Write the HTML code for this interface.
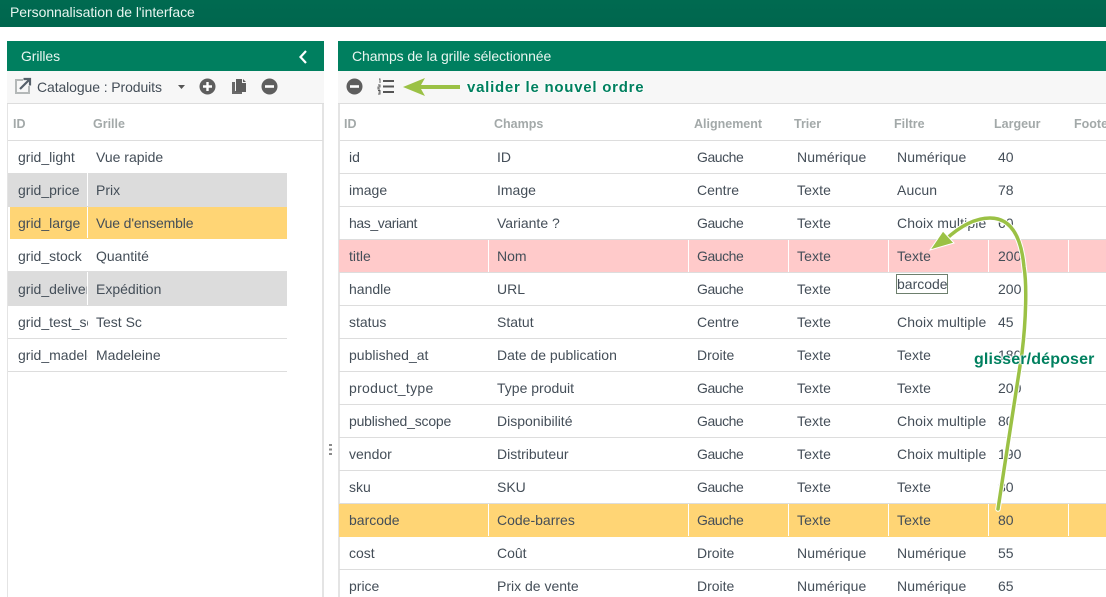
<!DOCTYPE html>
<html lang="fr"><head><meta charset="utf-8"><title>Personnalisation de l'interface</title>
<style>
*{box-sizing:border-box}
html,body{margin:0;padding:0;width:1106px;height:597px;overflow:hidden;background:#fff}
body{position:relative;font-family:"Liberation Sans",sans-serif;font-size:14px;color:#444e58}
.a{position:absolute}
.t{position:absolute;white-space:nowrap;line-height:18px}
.h{position:absolute;background:#007f5f;color:#e8f5f0;line-height:30px;height:30px;font-size:14px;letter-spacing:-.1px}
.bar{position:absolute;background:#f7f7f7;height:33px;border-bottom:1px solid #ddd}
.hd{position:absolute;white-space:nowrap;color:#a3a9a9;font-weight:bold;font-size:12.5px;line-height:18px}
.r{position:absolute;height:33px;border-bottom:1px solid #ddd;overflow:hidden}
.r span{position:absolute;top:7px;white-space:nowrap;line-height:18px}
.L{left:8px;width:279px}
.L span:nth-child(1){left:10px;width:70px;overflow:hidden}
.L span:nth-child(2){left:88px}
.R{left:339px;width:767px}
.R span:nth-child(1){left:10px}
.R span:nth-child(2){left:158px}
.R span:nth-child(3){left:358px}
.R span:nth-child(4){left:458px;letter-spacing:.1px}
.R span:nth-child(5){left:558px;letter-spacing:.1px}
.R span:nth-child(6){left:659px}
.R span.k{letter-spacing:-.45px}
.g{background:#dcdcdc;border-color:#dcdcdc}
.y{background:#ffd575;border-color:#ffd575}
.p{background:#ffcaca;border-color:#ddd}
.div{position:absolute;top:0;bottom:0;width:1px;background:#fff}
.lab{position:absolute;white-space:nowrap;color:#00805f;font-weight:bold;line-height:18px;text-shadow:0 0 2px #fff,0 0 2px #fff,1px 0 1px #fff,-1px 0 1px #fff}
</style></head><body>
<div class="a" style="left:0;top:0;width:1106px;height:27px;background:linear-gradient(#006a50,#00664e)"></div>
<div class="t" style="left:10px;top:3px;color:#e8f5f0;font-size:14px;letter-spacing:-.05px">Personnalisation de l'interface</div>

<!-- left panel -->
<div class="a" style="left:7px;top:41px;width:317px;height:556px;border-left:1px solid #e4e4e4;border-right:2px solid #e4e4e4"></div>
<div class="h" style="left:7px;top:41px;width:317px;padding-left:14px">Grilles</div>
<svg class="a" style="left:297px;top:49px" width="12" height="16" viewBox="0 0 12 16"><path d="M9 2 3.500 8 9 14" fill="none" stroke="#fff" stroke-width="2.200"/></svg>
<div class="bar" style="left:7px;top:71px;width:317px"></div>
<svg class="a" style="left:14px;top:77px" width="18" height="18" viewBox="0 0 18 18"><path d="M9 3H2v13h13V9" fill="none" stroke="#b4b8b8" stroke-width="2"/><path d="M6 12 15 3M9.500 2H16v6.500" fill="none" stroke="#56606a" stroke-width="2.200"/></svg>
<div class="t" style="left:37px;top:78px;letter-spacing:-.1px">Catalogue : Produits</div>
<svg class="a" style="left:177px;top:85px" width="9" height="5"><path d="M1 0h7L4.500 4z" fill="#555"/></svg>
<svg class="a" style="left:199px;top:78px" width="17" height="17" viewBox="0 0 17 17"><circle cx="8.500" cy="8.500" r="8" fill="#5e5e5e"/><path d="M8.500 4v9M4 8.500h9" stroke="#fff" stroke-width="2.400"/></svg>
<svg class="a" style="left:231px;top:78px" width="16" height="17" viewBox="0 0 16 17"><path d="M1 4h3v9h7v3H1z" fill="#6a6a6a"/><path d="M5 1h6v4h4v9H5zM12 1l3 3h-3z" fill="#5e5e5e"/></svg>
<svg class="a" style="left:261px;top:78px" width="17" height="17" viewBox="0 0 17 17"><circle cx="8.500" cy="8.500" r="8" fill="#5e5e5e"/><path d="M4 8.500h9" stroke="#fff" stroke-width="2.600"/></svg>
<div class="a" style="left:8px;top:140px;width:315px;height:1px;background:#ddd"></div>
<div class="hd" style="left:13px;top:115px">ID</div>
<div class="hd" style="left:93px;top:115px">Grille</div>
<div class="r L" style="top:141px"><span>grid_light</span><span>Vue rapide</span></div>
<div class="r L g" style="top:173px;height:34px"><span style="top:8px">grid_price</span><span style="top:8px">Prix</span><i class="div" style="left:79px"></i></div>
<div class="r L y" style="top:207px;height:32px;left:10px;width:277px"><span style="left:8px;top:7px">grid_large</span><span style="left:86px;top:7px;letter-spacing:-.15px">Vue d'ensemble</span><i class="div" style="left:77px"></i></div>
<div class="r L" style="top:240px;height:32px"><span>grid_stock</span><span>Quantité</span></div>
<div class="r L g" style="top:272px;height:34px"><span style="top:8px">grid_deliver</span><span style="top:8px">Expédition</span><i class="div" style="left:79px"></i></div>
<div class="r L" style="top:306px"><span>grid_test_sc</span><span>Test Sc</span></div>
<div class="r L" style="top:339px"><span>grid_madeleine</span><span>Madeleine</span></div>

<!-- splitter -->
<svg class="a" style="left:329px;top:443px" width="4" height="13"><path d="M0 1h3v2H0zM0 5.500h3v2H0zM0 10h3v2H0z" fill="#8a8a8a"/></svg>

<!-- right panel -->
<div class="a" style="left:338px;top:41px;width:2px;height:556px;background:#e4e4e4"></div>
<div class="h" style="left:338px;top:41px;width:768px;padding-left:14px">Champs de la grille sélectionnée</div>
<div class="bar" style="left:338px;top:71px;width:768px"></div>
<svg class="a" style="left:346px;top:78px" width="17" height="17" viewBox="0 0 17 17"><circle cx="8.500" cy="8.500" r="8" fill="#5e5e5e"/><path d="M4 8.500h9" stroke="#fff" stroke-width="2.600"/></svg>
<svg class="a" style="left:377px;top:78px" width="18" height="17" viewBox="0 0 18 17"><path d="M6 3h11M6 8.500h11M6 14h11" stroke="#555" stroke-width="2"/><path d="M2 1h1v4M1 7h2v2H1v2h2M1 12.500h2v1.500H1.500 3v2H1" fill="none" stroke="#555" stroke-width=".9"/></svg>
<svg class="a" style="left:400px;top:75px" width="64" height="24"><path d="M3 12 25 3 21 10H60V14H21L25 21Z" fill="#9bc145"/></svg>
<div class="lab" style="left:467px;top:79px;font-size:15px;letter-spacing:.75px">valider le nouvel ordre</div>

<div class="a" style="left:340px;top:140px;width:766px;height:1px;background:#ddd"></div>
<div class="hd" style="left:344px;top:115px">ID</div>
<div class="hd" style="left:494px;top:115px">Champs</div>
<div class="hd" style="left:694px;top:115px">Alignement</div>
<div class="hd" style="left:794px;top:115px">Trier</div>
<div class="hd" style="left:894px;top:115px">Filtre</div>
<div class="hd" style="left:994px;top:115px">Largeur</div>
<div class="hd" style="left:1074px;top:115px">Footer</div>

<div class="r R" style="top:141px"><span>id</span><span>ID</span><span class="k">Gauche</span><span>Numérique</span><span>Numérique</span><span>40</span></div>
<div class="r R" style="top:174px"><span>image</span><span>Image</span><span>Centre</span><span>Texte</span><span>Aucun</span><span>78</span></div>
<div class="r R" style="top:207px"><span style="letter-spacing:-.4px">has_variant</span><span>Variante ?</span><span class="k">Gauche</span><span>Texte</span><span>Choix multiple</span><span>60</span></div>
<div class="r R p" style="top:240px"><span>title</span><span>Nom</span><span class="k">Gauche</span><span>Texte</span><span>Texte</span><span>200</span><i class="div" style="left:149px"></i><i class="div" style="left:349px"></i><i class="div" style="left:449px"></i><i class="div" style="left:549px"></i><i class="div" style="left:649px"></i><i class="div" style="left:729px"></i></div>
<div class="r R" style="top:273px"><span>handle</span><span>URL</span><span class="k">Gauche</span><span>Texte</span><span></span><span>200</span></div>
<div class="a" style="left:896px;top:274px;width:52px;height:20px;border:1px solid #6d7f6d;background:#fff;line-height:18px;padding-left:0">barcode</div>
<div class="r R" style="top:306px"><span>status</span><span>Statut</span><span>Centre</span><span>Texte</span><span>Choix multiple</span><span>45</span></div>
<div class="r R" style="top:339px"><span>published_at</span><span>Date de publication</span><span>Droite</span><span>Texte</span><span>Texte</span><span>180</span></div>
<div class="r R" style="top:372px"><span style="letter-spacing:.3px">product_type</span><span>Type produit</span><span class="k">Gauche</span><span>Texte</span><span>Texte</span><span>200</span></div>
<div class="r R" style="top:405px"><span style="letter-spacing:-.2px">published_scope</span><span>Disponibilité</span><span class="k">Gauche</span><span>Texte</span><span>Choix multiple</span><span>80</span></div>
<div class="r R" style="top:438px"><span>vendor</span><span>Distributeur</span><span class="k">Gauche</span><span>Texte</span><span>Choix multiple</span><span>190</span></div>
<div class="r R" style="top:471px"><span>sku</span><span>SKU</span><span class="k">Gauche</span><span>Texte</span><span>Texte</span><span>80</span></div>
<div class="r R y" style="top:504px"><span>barcode</span><span>Code-barres</span><span class="k">Gauche</span><span>Texte</span><span>Texte</span><span>80</span><i class="div" style="left:149px"></i><i class="div" style="left:349px"></i><i class="div" style="left:449px"></i><i class="div" style="left:549px"></i><i class="div" style="left:649px"></i><i class="div" style="left:729px"></i></div>
<div class="r R" style="top:537px"><span>cost</span><span>Coût</span><span>Droite</span><span>Numérique</span><span>Numérique</span><span>55</span></div>
<div class="r R" style="top:570px"><span>price</span><span>Prix de vente</span><span>Droite</span><span>Numérique</span><span>Numérique</span><span>65</span></div>

<!-- drag arrow -->
<svg class="a" style="left:920px;top:205px" width="130" height="320" viewBox="920 205 130 320">
<path d="M998 509C1006 455 1016 395 1022 353 1026 320 1027 285 1024 267 1022 245 1015 218 990 218 973 218 958 228 945 240" fill="none" stroke="#fff" stroke-width="5.500" stroke-linecap="round"/>
<path d="M998 509C1006 455 1016 395 1022 353 1026 320 1027 285 1024 267 1022 245 1015 218 990 218 973 218 958 228 945 240" fill="none" stroke="#9bc145" stroke-width="3.500" stroke-linecap="round"/>
<path d="M930 250 943 231 954 243Z" fill="#9bc145" stroke="#fff" stroke-width="1"/>
</svg>
<div class="lab" style="left:974px;top:351px;font-size:16px;letter-spacing:.15px">glisser/déposer</div>
</body></html>
